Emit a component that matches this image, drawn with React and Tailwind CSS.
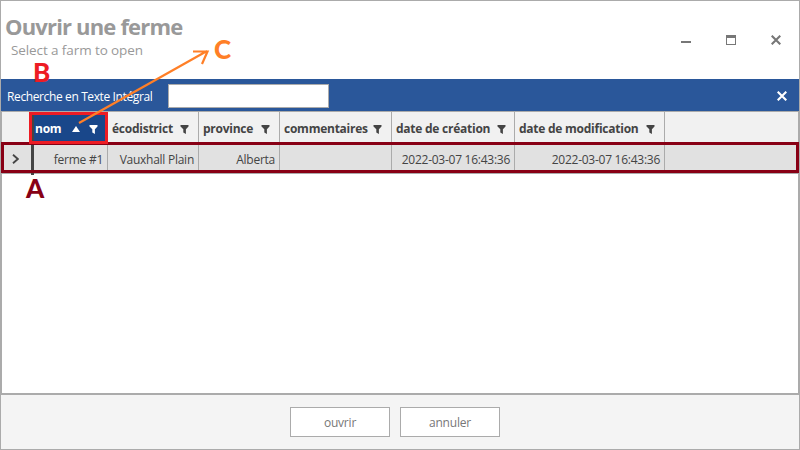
const COLUMNS = [
  { label: "nom", value: "ferme #1", w: "w-[74px]", pad: "pl-[1px]", tw: "w-[27px]", active: true },
  { label: "écodistrict", value: "Vauxhall Plain", w: "w-[91px]", pad: "pl-1", tw: "w-[59px]" },
  { label: "province", value: "Alberta", w: "w-[81px]", pad: "pl-1", tw: "w-[49px]" },
  { label: "commentaires", value: "", w: "w-[112px]", pad: "pl-1", tw: "w-[80px]" },
  { label: "date de création", value: "2022-03-07 16:43:36", w: "w-[123px]", pad: "pl-1", tw: "w-[92px]" },
  { label: "date de modification", value: "2022-03-07 16:43:36", w: "w-[150px]", pad: "pl-1", tw: "w-[118px]" },
];

function Funnel({ className }) {
  return (
    <svg className={className} width="9" height="9" viewBox="0 0 9 9" fill="currentColor">
      <path d="M.5 0h8v1.500L5.900 4.200V9L3.300 7.400V4.200L.5 1.500z" />
    </svg>
  );
}

function Cross({ className }) {
  return (
    <svg className={className} width="10" height="10" viewBox="0 0 10 10" stroke="currentColor" strokeWidth="2.1">
      <path d="M.7.7l8.6 8.6M9.3.7L.7 9.3" />
    </svg>
  );
}

function TitleBar() {
  return (
    <header className="flex h-[78px] justify-between bg-white text-[#999]">
      <div className="pl-1 pt-[10px]">
        <h1 className="h-[31px] whitespace-nowrap text-[22px] font-bold leading-[31px] tracking-[-0.83px]">Ouvrir une ferme</h1>
        <p className="pl-[6px] text-[13.5px] leading-[16px] tracking-[-0.1px]">Select a farm to open</p>
      </div>
      <div className="flex gap-[35px] pr-[18px] pt-[34px] text-[#777]">
        <span className="mt-[6px] h-[2px] w-[10px] bg-[#777]" />
        <span className="h-[10px] w-[10px] border border-t-[3px] border-[#777]" />
        <Cross />
      </div>
    </header>
  );
}

function SearchBar() {
  return (
    <div className="flex h-8 items-center bg-[#2a579a] text-white">
      <label className="w-[161px] whitespace-nowrap pl-[6px] pt-[3px] text-[12px] tracking-[-0.38px]">Recherche en Texte Intégral</label>
      <div className="ml-[6px] mt-[2px] h-6 w-[161px] border border-[#ababab] bg-white" />
      <Cross className="ml-auto mr-[12px] mt-[2px]" />
    </div>
  );
}

function Grid() {
  return (
    <div className="h-[284px] border-x border-b-2 border-t border-[#ababab] bg-white text-[12px] tracking-[-0.26px] text-[#444]">
      <div className="flex h-[31px] bg-[#f1f1f1] font-bold">
        <div className="flex w-[32px] border-r border-[#ababab]" />
        {COLUMNS.map((c) => (
          <div key={c.label} className={`${c.w} ${c.pad} flex shrink-0 items-center border-r border-[#ababab] pt-[3px] ${c.active ? "bg-[#19478a] text-white" : ""}`}>
            <span className={`${c.tw} whitespace-nowrap text-[12px] tracking-[-0.25px]`}>{c.label}</span>
            {c.active && (
              <svg className="ml-[10px]" width="8" height="6" fill="currentColor"><path d="M4 0l4 6H0z" /></svg>
            )}
            <Funnel className="ml-[9px]" />
          </div>
        ))}
      </div>
      <div className="flex h-[31px] border-b border-[#ababab] bg-[#e1e1e1]">
        <div className="flex w-[32px] items-center border-r-[3px] border-[#444] pl-[10px] pt-[2px]">
          <svg width="7" height="10" fill="none" stroke="#444" strokeWidth="1.8"><path d="M1 .8L5.8 5 1 9.200" /></svg>
        </div>
        {COLUMNS.map((c) => (
          <div key={c.label} className={`${c.w} flex shrink-0 items-center justify-end whitespace-nowrap border-r border-[#ababab] pr-1 pt-[3px]`}>
            {c.value}
          </div>
        ))}
      </div>
    </div>
  );
}

function Annotations() {
  return (
    <div className="pointer-events-none absolute inset-0 font-['Lato',sans-serif] text-[26px] font-black leading-[30px]">
      <div className="absolute left-[1px] top-[142px] h-[31px] w-[798px] border-[3px] border-[#880015]" />
      <div className="absolute left-[29px] top-[112px] h-[32px] w-[79px] border-[3px] border-[#ed1c24]" />
      <div className="absolute left-[32px] top-[115px] h-[26px] w-[2px] bg-[#444]" />
      <div className="absolute left-[31px] top-[173px] h-[2px] w-[3px] bg-[#444]" />
      <svg className="absolute inset-0" width="800" height="450" fill="none" stroke="#ff7f27" strokeWidth="2.2">
        <path d="M79 123L207 51M193 51.5h14.500L202 64" />
      </svg>
      <span className="absolute left-[33px] top-[57px] text-[#ed1c24]">B</span>
      <span className="absolute left-[26px] top-[173px] text-[#880015]">A</span>
      <span className="absolute left-[214px] top-[34px] text-[#ff7f27]">C</span>
    </div>
  );
}

export default function App() {
  return (
    <div className="relative h-[450px] w-[800px] overflow-hidden border border-[#ababab] bg-[#f4f4f4] font-['Open_Sans',sans-serif]">
      <TitleBar />
      <SearchBar />
      <Grid />
      <footer className="flex justify-center gap-[10px] pr-[10px] pt-3 text-[12px] tracking-[-0.2px] text-[#777]">
        <button className="h-[30px] w-[100px] border border-[#ababab] bg-white pt-[2px]">ouvrir</button>
        <button className="h-[30px] w-[100px] border border-[#ababab] bg-white pt-[2px]">annuler</button>
      </footer>
      <div className="absolute -left-px -top-px h-[450px] w-[800px]">
        <Annotations />
      </div>
    </div>
  );
}
